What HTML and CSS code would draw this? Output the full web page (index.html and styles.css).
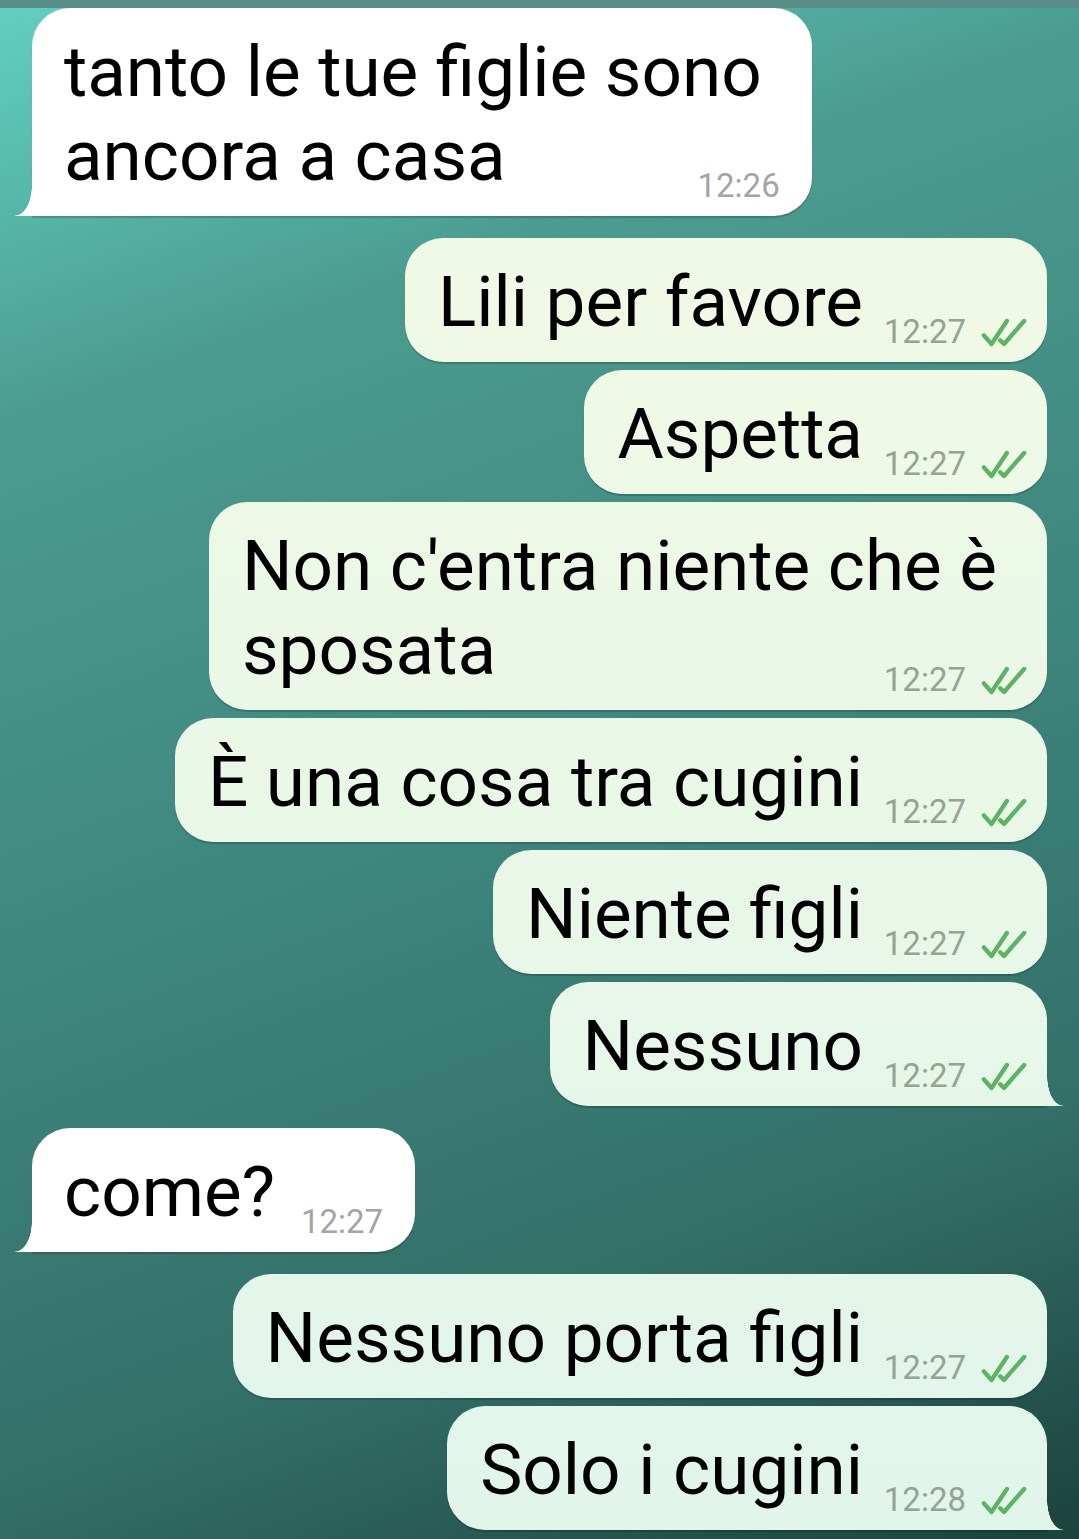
FILE: index.html
```html
<!DOCTYPE html>
<html lang="it">
<head>
    <meta charset="UTF-8">
    <meta name="viewport" content="width=device-width, initial-scale=1.0">
    <title>Chat</title>
    <link rel="stylesheet" href="styles.css">
</head>
<body>
    <div class="topbar"></div>
    <div class="chat">
        <div class="msg in tail multi">
            <span class="text">tanto le tue figlie sono<br>ancora a casa</span><span class="spacer"></span>
            <span class="meta"><span class="time">12:26</span></span>
        </div>

        <div class="msg out">
            <span class="text">Lili per favore</span><span class="spacer"></span>
            <span class="meta"><span class="time">12:27</span><svg class="ticks" viewBox="0 0 50 30"><path d="M4 18 L12 27 L28 3 M21 23 L25 27 L46 3"/></svg></span>
        </div>
        <div class="msg out">
            <span class="text">Aspetta</span><span class="spacer"></span>
            <span class="meta"><span class="time">12:27</span><svg class="ticks" viewBox="0 0 50 30"><path d="M4 18 L12 27 L28 3 M21 23 L25 27 L46 3"/></svg></span>
        </div>
        <div class="msg out multi">
            <span class="text">Non c'entra niente che è<br>sposata</span><span class="spacer"></span>
            <span class="meta"><span class="time">12:27</span><svg class="ticks" viewBox="0 0 50 30"><path d="M4 18 L12 27 L28 3 M21 23 L25 27 L46 3"/></svg></span>
        </div>
        <div class="msg out">
            <span class="text">È una cosa tra cugini</span><span class="spacer"></span>
            <span class="meta"><span class="time">12:27</span><svg class="ticks" viewBox="0 0 50 30"><path d="M4 18 L12 27 L28 3 M21 23 L25 27 L46 3"/></svg></span>
        </div>
        <div class="msg out">
            <span class="text">Niente figli</span><span class="spacer"></span>
            <span class="meta"><span class="time">12:27</span><svg class="ticks" viewBox="0 0 50 30"><path d="M4 18 L12 27 L28 3 M21 23 L25 27 L46 3"/></svg></span>
        </div>
        <div class="msg out tail">
            <span class="text">Nessuno</span><span class="spacer"></span>
            <span class="meta"><span class="time">12:27</span><svg class="ticks" viewBox="0 0 50 30"><path d="M4 18 L12 27 L28 3 M21 23 L25 27 L46 3"/></svg></span>
        </div>

        <div class="msg in tail">
            <span class="text">come?</span><span class="spacer"></span>
            <span class="meta"><span class="time">12:27</span></span>
        </div>

        <div class="msg out">
            <span class="text">Nessuno porta figli</span><span class="spacer"></span>
            <span class="meta"><span class="time">12:27</span><svg class="ticks" viewBox="0 0 50 30"><path d="M4 18 L12 27 L28 3 M21 23 L25 27 L46 3"/></svg></span>
        </div>
        <div class="msg out tail">
            <span class="text">Solo i cugini</span><span class="spacer"></span>
            <span class="meta"><span class="time">12:28</span><svg class="ticks" viewBox="0 0 50 30"><path d="M4 18 L12 27 L28 3 M21 23 L25 27 L46 3"/></svg></span>
        </div>
    </div>
</body>
</html>
```

FILE: styles.css
```css
body {
    margin: 0;
    height: 1539px;
    overflow: hidden;
    font-family: Roboto, "Noto Sans", sans-serif;
    color: #000;
    background: linear-gradient(160deg, #62d0c2 0%, #4b9c90 22%, #3f877e 50%, #326f67 78%, #1c423c 100%);
}

.topbar {
    height: 8px;
    background-color: #5a8d87;
}

.chat {
    display: flex;
    flex-direction: column;
    padding: 0 32px;
}

.msg {
    position: relative;
    max-width: 900px;
    padding: 22px 19px 18px 33px;
    font-size: 71px;
    line-height: 84px;
    border-radius: 38px;
    box-shadow: 0 2px 1px rgba(0, 0, 0, 0.18);
}

.in {
    align-self: flex-start;
    background-color: #fff;
    padding-left: 32px;
    padding-right: 32px;
}

.out {
    align-self: flex-end;
    background: linear-gradient(180deg, #f3faE4 0%, #e1f5eb 100%) fixed;
}

.out + .out {
    margin-top: 8px;
}

.in + .out,
.out + .in {
    margin-top: 22px;
}

.multi {
    padding-right: 50px;
}

.spacer {
    display: inline-block;
    width: 108px;
}

.out .spacer {
    width: 165px;
}

.meta {
    position: absolute;
    right: 32px;
    bottom: 10px;
    display: flex;
    align-items: center;
    line-height: 40px;
}

.out .meta {
    right: 19px;
}

.time {
    font-size: 33px;
    color: #a2a5a2;
}

.out .time {
    color: #93a493;
}

.ticks {
    width: 48px;
    height: 29px;
    margin-left: 14px;
    fill: none;
    stroke: #5cb462;
    stroke-width: 4.5;
    stroke-linecap: round;
    stroke-linejoin: round;
}

/* bubble tails */
.in.tail {
    border-bottom-left-radius: 0;
}

.out.tail {
    border-bottom-right-radius: 0;
}

.tail::after {
    content: "";
    position: absolute;
    bottom: 0;
    width: 17px;
    height: 30px;
}

.in.tail::after {
    left: -17px;
    background: radial-gradient(17px 30px at 0 0, transparent 97%, #fff 100%);
}

.out.tail::after {
    right: -16px;
    width: 16px;
    background: radial-gradient(16px 30px at 100% 0, transparent 97%, #e4f6ea 100%);
}
```
